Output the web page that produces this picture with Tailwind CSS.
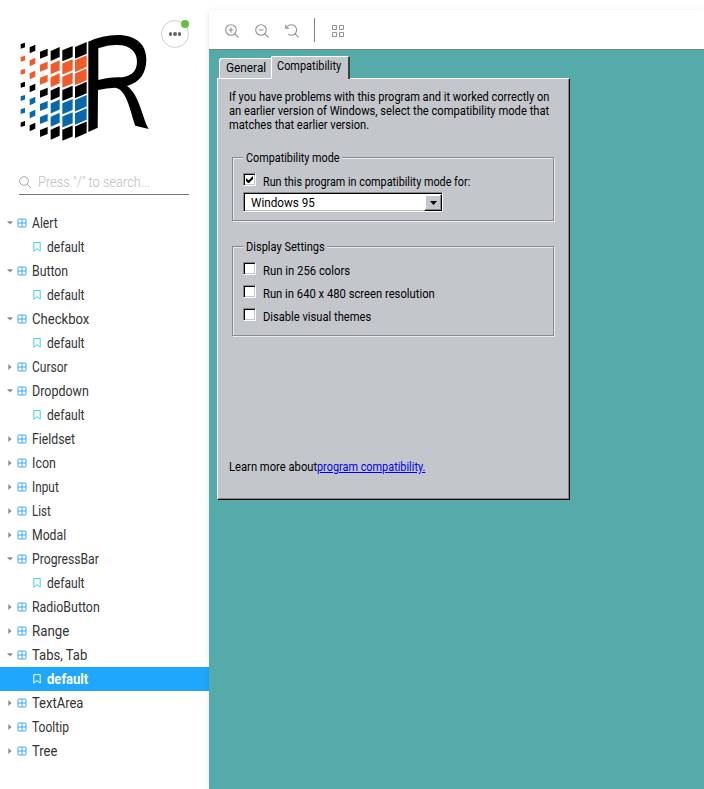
<!DOCTYPE html>
<html lang="en">
<head>
<meta charset="utf-8">
<title>Storybook</title>
<script src="https://cdn.jsdelivr.net/npm/@tailwindcss/browser@4"></script>
</head>
<body class="bg-white overflow-hidden font-['Roboto',sans-serif]">
<div class="flex w-[704px] h-[789px] overflow-hidden">
  <aside class="w-[209px] shrink-0 h-full flex flex-col">
    <header class="relative h-[170px] shrink-0">
      <svg class="block w-[210px] h-[150px]" viewBox="0 -30 630 450" aria-label="logo">
        <g id="flag"></g>
        <path fill="#000" fill-rule="evenodd" d="M265 95Q308 75 352 75C410 75 439 105 439 148C439 190 420 217 381 228C419 255 425 320 446 357L406 347C392 310 381 236 345 233Q320 234 294 240L293 353L265 366ZM295 115Q325 104 352 105C393 105 411 128 411 155C411 188 388 202 355 202Q320 203 295 210Z"/>
      </svg>
      <div class="absolute left-[161px] top-[20px] w-7 h-7 rounded-full border border-[#cfcfcf] flex items-center justify-center gap-px">
        <i class="size-[3.4px] rounded-full bg-[#666]"></i><i class="size-[3.4px] rounded-full bg-[#666]"></i><i class="size-[3.4px] rounded-full bg-[#666]"></i>
        <b class="absolute -top-px -right-px size-2 rounded-full bg-[#66bf3c]"></b>
      </div>
    </header>
    <div class="ml-[19px] w-[170px] h-[25px] shrink-0 border-b border-[#777] flex items-center text-[#bdbdbd]">
      <svg class="size-3 mr-[7px] shrink-0" viewBox="0 0 12 12" fill="none" stroke="#aaa" stroke-width="1"><circle cx="5" cy="5" r="4.3"/><path d="M8.2 8.2 11.5 11.5"/></svg>
      <span class="text-[14px] font-light whitespace-nowrap origin-left inline-block" data-w="112">Press "/" to search...</span>
    </div>
    <nav id="tree" class="mt-4 flex flex-col"></nav>
  </aside>

  <main class="mt-[10px] flex-1 min-w-0 flex flex-col bg-[#55aaaa] shadow-[0_1px_5px_rgba(0,0,0,0.12)]">
    <div class="h-10 shrink-0 bg-white border-b border-[#808080] flex items-center pl-4 text-[#929292]">
      <svg class="size-[14px] mt-[2px]" viewBox="0 0 14 14" fill="none" stroke="currentColor" stroke-width="1.1"><circle cx="6" cy="6" r="5.3"/><path d="M9.8 9.8 13.5 13.5M3.5 6h5M6 3.5v5"/></svg>
      <svg class="size-[14px] mt-[2px] ml-4" viewBox="0 0 14 14" fill="none" stroke="currentColor" stroke-width="1.1"><circle cx="6" cy="6" r="5.3"/><path d="M9.8 9.8 13.5 13.5M3.5 6h5"/></svg>
      <svg class="size-[14px] mt-[2px] ml-4" viewBox="0 0 14 14" fill="none" stroke="currentColor" stroke-width="1.1"><path d="M1.5 3.8A5.3 5.3 0 1 1 3.2 10.3M.7 1v3.3h3.5M10.2 9.8 13.6 13.5"/></svg>
      <i class="w-px h-6 bg-[#808080] ml-[15px]"></i>
      <svg class="size-3 mt-[2px] ml-[17px]" viewBox="0 0 12 12" fill="none" stroke="currentColor"><path d="M.5.5h4v4h-4zM7.5.5h4v4h-4zM.5 7.5h4v4h-4zM7.5 7.5h4v4h-4z"/></svg>
    </div>

    <section class="ml-2 mt-[6px] w-[353px] flex flex-col text-[13px] leading-[14px] text-black">
      <div class="flex items-end pl-[2px] h-[22px]">
        <div class="w-[52px] h-5 rounded-tl-[3px] bg-[#c3c7cb] border-l border-t border-white pl-[6px] pt-[2px]"><span class="block w-max origin-left whitespace-nowrap" data-w="40">General</span></div>
        <div class="relative z-10 -mb-px w-[79px] h-[23px] rounded-t-[2px] bg-[#c3c7cb] border-l border-t border-l-white border-t-white border-r-2 border-r-[#404040] pl-[5px] pt-[2px]"><span class="block w-max origin-left whitespace-nowrap" data-w="64">Compatibility</span></div>
      </div>
      <div class="h-[422px] bg-[#c3c7cb] border border-l-white border-t-white border-r-black border-b-black shadow-[inset_-1px_-1px_0_#868a8e] pl-[11px] pt-[11px] flex flex-col">
        <p class="h-[42px]">
          <span class="block w-max origin-left whitespace-nowrap" data-w="320">If you have problems with this program and it worked correctly on</span>
          <span class="block w-max origin-left whitespace-nowrap" data-w="320">an earlier version of Windows, select the compatibility mode that</span>
          <span class="block w-max origin-left whitespace-nowrap" data-w="140">matches that earlier version.</span>
        </p>
        <div class="relative ml-[3px] mt-[25px] w-[322px] h-[64px] border border-[#868a8e] shadow-[1px_1px_0_#e8eaec,inset_1px_1px_0_#e8eaec] pl-[10px] pt-[15px]">
          <div class="absolute left-[10px] -top-[7px] w-[99px] h-[14px] pl-[3px] bg-[#c3c7cb]"><span class="block w-max origin-left whitespace-nowrap" data-w="94">Compatibility mode</span></div>
          <div class="flex items-start">
            <i class="size-[13px] bg-white border border-l-[#868a8e] border-t-[#868a8e] border-r-white border-b-white shadow-[inset_1px_1px_0_#000,inset_-1px_-1px_0_#c3c7cb] p-px"><svg class="block size-[9px]" viewBox="0 0 9 9"><path d="M1 3v3l2 2h1l4-4V1L4 5H3z" fill="#000"/></svg></i>
            <span class="ml-[7px] mt-[2px] block w-max origin-left whitespace-nowrap" data-w="207">Run this program in compatibility mode for:</span>
          </div>
          <div class="mt-[3px] w-[200px] h-[20px] bg-white border border-l-[#868a8e] border-t-[#868a8e] border-r-white border-b-white shadow-[inset_1px_1px_0_#000,inset_0_-1px_0_#c3c7cb] flex justify-between pl-px pt-px">
            <span class="mt-[2px] ml-[6px] block w-max origin-left whitespace-nowrap" data-w="64">Windows 95</span>
            <b class="w-[18px] h-[17px] shrink-0 bg-[#c3c7cb] border border-l-white border-t-white border-r-black border-b-black shadow-[inset_-1px_-1px_0_#868a8e,inset_1px_1px_0_#fff] flex items-center justify-center"><svg class="w-[7px] h-1" viewBox="0 0 7 4"><path d="M0 0h7L3.5 4z"/></svg></b>
          </div>
        </div>
        <div class="relative ml-[3px] mt-[25px] w-[322px] h-[90px] border border-[#868a8e] shadow-[1px_1px_0_#e8eaec,inset_1px_1px_0_#e8eaec] pl-[10px] pt-[15px] flex flex-col gap-[8px]">
          <div class="absolute left-[10px] -top-[7px] w-[84px] h-[14px] pl-[3px] bg-[#c3c7cb]"><span class="block w-max origin-left whitespace-nowrap" data-w="79">Display Settings</span></div>
          <div class="h-[15px] flex"><i class="size-[13px] bg-white border border-l-[#868a8e] border-t-[#868a8e] border-r-white border-b-white shadow-[inset_1px_1px_0_#000,inset_-1px_-1px_0_#c3c7cb]"></i><span class="ml-[7px] mt-[2px] block w-max origin-left whitespace-nowrap" data-w="87">Run in 256 colors</span></div>
          <div class="h-[15px] flex"><i class="size-[13px] bg-white border border-l-[#868a8e] border-t-[#868a8e] border-r-white border-b-white shadow-[inset_1px_1px_0_#000,inset_-1px_-1px_0_#c3c7cb]"></i><span class="ml-[7px] mt-[2px] block w-max origin-left whitespace-nowrap" data-w="172">Run in 640 x 480 screen resolution</span></div>
          <div class="h-[15px] flex"><i class="size-[13px] bg-white border border-l-[#868a8e] border-t-[#868a8e] border-r-white border-b-white shadow-[inset_1px_1px_0_#000,inset_-1px_-1px_0_#c3c7cb]"></i><span class="ml-[7px] mt-[2px] block w-max origin-left whitespace-nowrap" data-w="108">Disable visual themes</span></div>
        </div>
        <div class="mt-[124px] flex">
          <span class="w-[88px]"><span class="block w-max origin-left whitespace-nowrap" data-w="88">Learn more about</span></span>
          <a class="block w-max origin-left whitespace-nowrap text-[#0000ee] underline" data-w="108">program compatibility.</a>
        </div>
      </div>
    </section>
  </main>
</div>
<script>
// Flag columns: left x, right x, first centre y, row step, left-top, right-top offsets
const columns = [
  [62, 75, 107, 39.2, -5, -9],
  [89, 106, 117, 39, -5, -13],
  [120, 143, 131, 39.2, -6, -15],
  [152, 179, 132, 39.4, -9, -21],
  [187, 218, 131, 39.7, -10, -23],
  [225, 260, 121, 39.7, -10, -25]
];
const fills = ['#000', '#f15a2b', '#f15a2b', '#000', '#0868ac', '#0868ac', '#000'];
document.getElementById('flag').innerHTML = columns.map(([l, r, c, s, a, b]) =>
  fills.map((f, i) => {
    const y = c + i * s;
    return `<path fill="${f}" d="M${l} ${y + a}L${r} ${y + b}V${y - a}L${l} ${y - b}Z"/>`;
  }).join('')).join('');

// Sidebar entries: label, label width, expanded, selected child
const items = [
  ['Alert', 26, 1], ['Button', 36, 1], ['Checkbox', 57, 1], ['Cursor', 36], ['Dropdown', 57, 1],
  ['Fieldset', 43], ['Icon', 24], ['Input', 27], ['List', 19], ['Modal', 34], ['ProgressBar', 67, 1],
  ['RadioButton', 68], ['Range', 37], ['Tabs, Tab', 55, 1, 1], ['TextArea', 51], ['Tooltip', 37], ['Tree', 25]
];
const mark = '<svg class="w-2 h-[10px] ml-[33px] mr-[6px] shrink-0" viewBox="0 0 8 10" fill="none" stroke="currentColor"><path d="M.8.6h6.4v8.6L4 6.6.8 9.2z"/></svg>';
document.getElementById('tree').innerHTML = items.map(([t, w, open, sel]) => `
  <div class="h-6 flex items-center text-[#333]">
    <svg class="size-[6px] ml-[7px] mr-[5px] shrink-0" viewBox="0 0 6 6" fill="#8a8a8a"><path d="${open ? 'M0 1.2h6L3 4.4z' : 'M1.3 0v6L4.5 3z'}"/></svg>
    <svg class="size-[8px] mr-[6px] shrink-0 overflow-visible" viewBox="0 0 8 8" fill="none" stroke="#37a9f8"><rect width="8" height="8" rx="1"/><path d="M4 0v8M0 4h8"/></svg>
    <span class="text-[14px] whitespace-nowrap origin-left" data-w="${w}">${t}</span>
  </div>` + (open ? (sel
    ? `<div class="h-6 flex items-center bg-[#1ea7fd] text-white">${mark}<span class="text-[14px] font-bold whitespace-nowrap origin-left" data-w="41">default</span></div>`
    : `<div class="h-6 flex items-center text-[#37d5d3]">${mark}<span class="text-[14px] text-[#333] whitespace-nowrap origin-left" data-w="38">default</span></div>`) : '')).join('');

// Scale every label to its nominal width, again whenever its layout width changes
const fit = e => { if (e.offsetWidth) e.style.transform = `scaleX(${e.dataset.w / e.offsetWidth})`; };
const observer = new ResizeObserver(entries => entries.forEach(n => fit(n.target)));
document.querySelectorAll('[data-w]').forEach(e => { fit(e); observer.observe(e); });
window.addEventListener('load', () => document.querySelectorAll('[data-w]').forEach(fit));
</script>
</body>
</html>
